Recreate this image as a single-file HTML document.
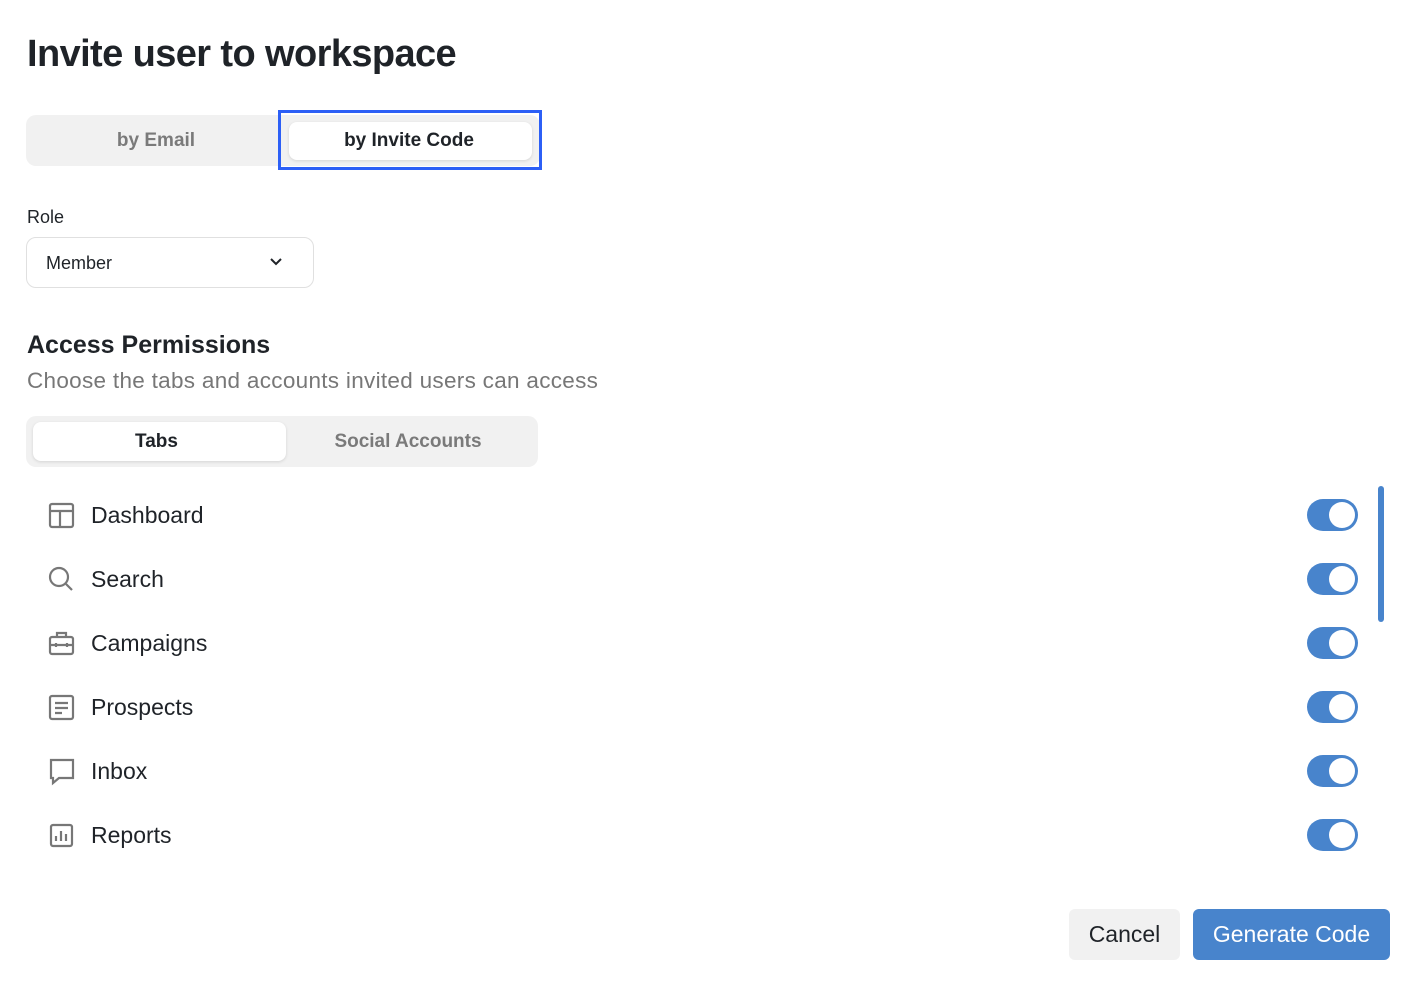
<!DOCTYPE html>
<html><head><style>
*{box-sizing:border-box;margin:0;padding:0}
body{width:1420px;height:986px;background:#fff;font-family:"Liberation Sans",sans-serif;color:#1f2328;position:relative;overflow:hidden}
.a{position:absolute}
h1{position:absolute;left:27px;top:33px;font-size:38px;font-weight:700;letter-spacing:-0.6px;color:#1f2328}
.seg{background:#f1f1f1;border-radius:10px}
.t{position:absolute;display:flex;align-items:center;justify-content:center;font-size:19px;font-weight:700}
.row{position:absolute;left:47px;display:flex;align-items:center;font-size:23px;color:#1f2328}
.row svg{margin-right:16px}
.tg{position:absolute;left:1307px;width:51px;height:32px;border-radius:16px;background:#4884cc}
.tg:after{content:"";position:absolute;right:3px;top:3px;width:26px;height:26px;border-radius:50%;background:#fff}
</style></head><body>
<h1>Invite user to workspace</h1>
<div class="a seg" style="left:26px;top:115px;width:514px;height:51px"></div>
<div class="t" style="left:26px;top:115px;width:260px;height:51px;color:#7a7a7a">by Email</div>
<div class="a" style="left:289px;top:122px;width:243px;height:38px;background:#fff;border-radius:8px;box-shadow:0 1px 3px rgba(0,0,0,.12)"></div>
<div class="a" style="left:278px;top:110px;width:264px;height:60px;border:3px solid #2c5ff6"></div>
<div class="t" style="left:289px;top:122px;width:240px;height:38px;color:#1f2328">by Invite Code</div>
<div class="a" style="left:27px;top:207px;font-size:18px">Role</div>
<div class="a" style="left:26px;top:237px;width:288px;height:51px;border:1px solid #e0e0e0;border-radius:10px"></div>
<div class="a" style="left:46px;top:253px;font-size:18px">Member</div>
<svg class="a" style="left:269px;top:256px" width="14" height="12" viewBox="0 0 14 12"><path d="M2 3l5 5 5-5" fill="none" stroke="#1f2328" stroke-width="2"/></svg>
<div class="a" style="left:27px;top:331px;font-size:25px;font-weight:700">Access Permissions</div>
<div class="a" style="left:27px;top:368px;font-size:22.5px;color:#777;letter-spacing:0.3px">Choose the tabs and accounts invited users can access</div>
<div class="a seg" style="left:26px;top:416px;width:512px;height:51px"></div>
<div class="a" style="left:33px;top:422px;width:253px;height:39px;background:#fff;border-radius:8px;box-shadow:0 1px 3px rgba(0,0,0,.12)"></div>
<div class="t" style="left:30px;top:422px;width:253px;height:39px;color:#1f2328">Tabs</div>
<div class="t" style="left:286px;top:416px;width:244px;height:51px;color:#7a7a7a">Social Accounts</div>
<div class="row" style="top:500px"><svg width="28" height="30" viewBox="0 0 28 30" fill="none" stroke="#777" stroke-width="2.2"><rect x="3" y="4" width="23" height="23" rx="2"/><path d="M3 11h23M13 11v16"/></svg>Dashboard</div>
<div class="row" style="top:564px"><svg width="28" height="30" viewBox="0 0 28 30" fill="none" stroke="#777" stroke-width="2.2"><circle cx="12" cy="13" r="9"/><path d="M19 20l6 6"/></svg>Search</div>
<div class="row" style="top:628px"><svg width="28" height="30" viewBox="0 0 28 30" fill="none" stroke="#777" stroke-width="2.2"><rect x="3" y="9" width="23" height="17" rx="2"/><path d="M10 9V5h9v4M3 17h23M9 15v4M20 15v4"/></svg>Campaigns</div>
<div class="row" style="top:692px"><svg width="28" height="30" viewBox="0 0 28 30" fill="none" stroke="#777" stroke-width="2.2"><rect x="3" y="4" width="23" height="23" rx="2"/><path d="M8 11h13M8 16h13M8 21h7"/></svg>Prospects</div>
<div class="row" style="top:756px"><svg width="28" height="30" viewBox="0 0 28 30" fill="none" stroke="#777" stroke-width="2.2"><path d="M4 4h22v18H12l-6 5v-5H4z"/></svg>Inbox</div>
<div class="row" style="top:820px"><svg width="28" height="30" viewBox="0 0 28 30" fill="none" stroke="#777" stroke-width="2.2"><rect x="4" y="5" width="21" height="21" rx="2"/><path d="M9 21v-5M14 21V11M19 21v-7"/></svg>Reports</div>
<div class="tg" style="top:499px"></div>
<div class="tg" style="top:563px"></div>
<div class="tg" style="top:627px"></div>
<div class="tg" style="top:691px"></div>
<div class="tg" style="top:755px"></div>
<div class="tg" style="top:819px"></div>
<div class="a" style="left:1378px;top:486px;width:6px;height:136px;border-radius:3px;background:#4884cc"></div>
<div class="t" style="left:1069px;top:909px;width:111px;height:51px;background:#f1f1f1;border-radius:6px;font-weight:400;font-size:23px">Cancel</div>
<div class="t" style="left:1193px;top:909px;width:197px;height:51px;background:#4884cc;border-radius:6px;font-weight:400;font-size:23px;color:#fff">Generate Code</div>
</body></html>
